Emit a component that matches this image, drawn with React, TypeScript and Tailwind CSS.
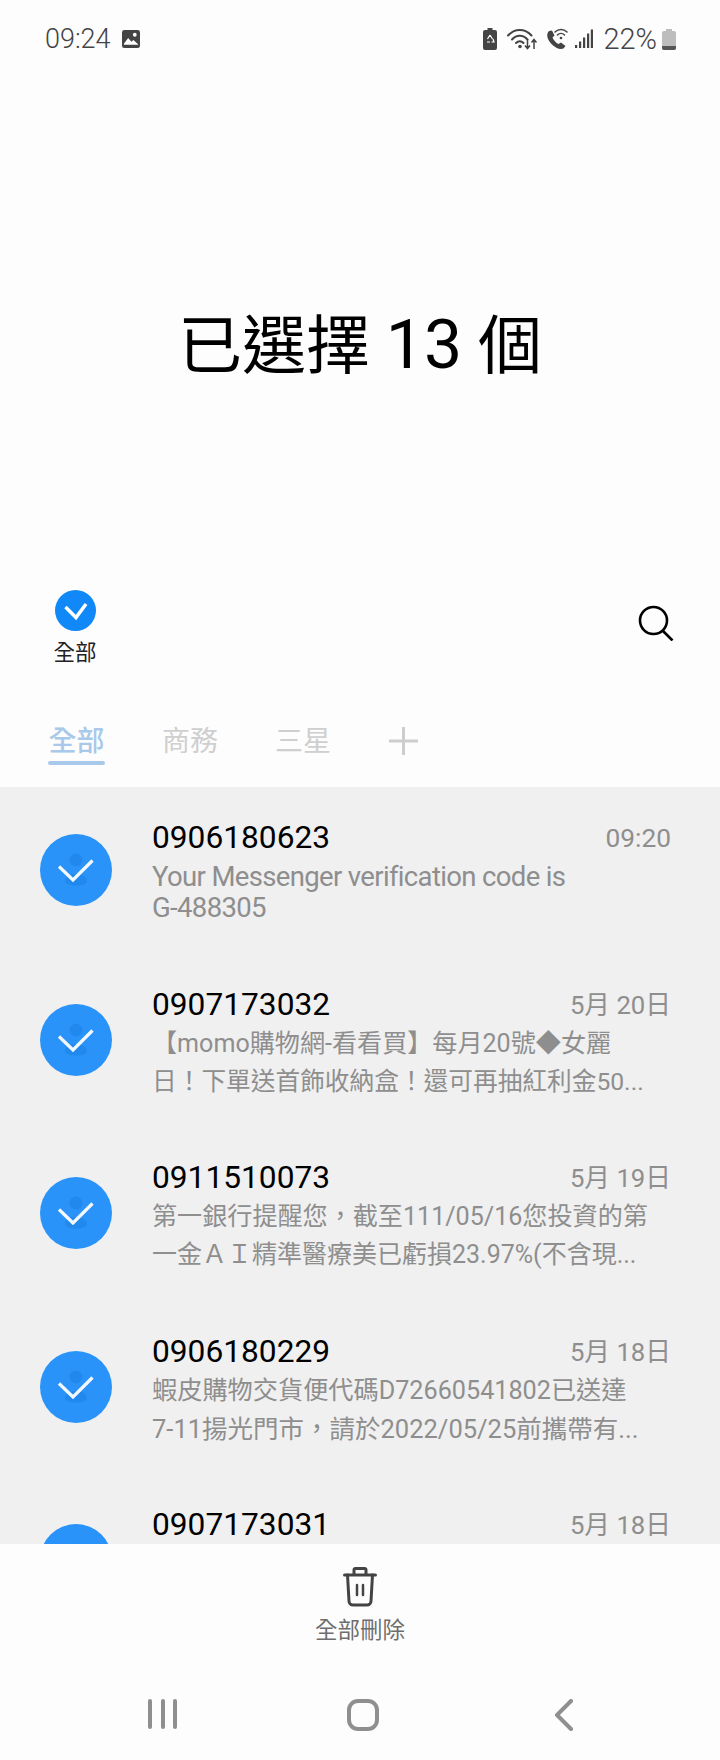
const cjk = { fontFamily: 'Roboto, "Noto Sans CJK TC", sans-serif' };

function RowCheck() {
  return (
    <svg width="72" height="72" viewBox="0 0 72 72" className="shrink-0">
      <circle cx="36" cy="36" r="36" fill="#2a93f9" />
      <circle cx="36" cy="26" r="6.500" fill="#2189ee" />
      <path d="M25 47c0-4 5-7 11-7s11 3 11 7c0 3-5 4.500-11 4.500S25 50 25 47z" fill="#2189ee" />
      <path d="M19 32.500l14 13.500 19.500-19.500" fill="none" stroke="#f4f9ff" strokeWidth="3.200" />
    </svg>
  );
}

const rows = [
  { h: 'h-[170px]', name: '0906180623', time: '09:20', t: 'text-[26.300px]', a: 'Your Messenger verification code is', b: 'G-488305', pt: 'pt-[33px]', text: 'mt-[5px] leading-[31px] tracking-[-0.650px]', la: 'text-[27.500px]', lb: 'text-[27.500px]' },
  { h: 'h-[173px]', name: '0907173032', time: '5月 20日', t: 'text-[25.700px]', a: '【momo購物網-看看買】每月20號◆女麗', b: '日！下單送首飾收納盒！還可再抽紅利金50...', pt: 'pt-[30px]', text: 'mt-[2px] leading-[38px]', la: 'text-[25.100px]', lb: 'text-[24.700px]' },
  { h: 'h-[174px]', name: '0911510073', time: '5月 19日', t: 'text-[25.700px]', a: '第一銀行提醒您，截至111/05/16您投資的第', b: '一金ＡＩ精準醫療美已虧損23.97%(不含現...', pt: 'pt-[30px]', text: 'mt-[2px] leading-[38px]', la: 'text-[25.100px]', lb: 'text-[25px]' },
  { h: 'h-[173px]', name: '0906180229', time: '5月 18日', t: 'text-[25.700px]', a: '蝦皮購物交貨便代碼D72660541802已送達', b: '7-11揚光門市，請於2022/05/25前攜帶有...', pt: 'pt-[30px]', text: 'mt-[2px] leading-[38px]', la: 'text-[25.200px]', lb: 'text-[25.500px]' },
  { h: 'h-[173px]', name: '0907173031', time: '5月 18日', t: 'text-[25.700px]', a: '', b: '', pt: 'pt-[30px]', text: 'mt-[2px] leading-[38px]', la: 'text-[25.100px]', lb: 'text-[25.100px]' },
];

export default function App() {
  return (
    <div className="w-[720px] h-[1760px] flex flex-col overflow-hidden bg-[#fdfdfd]" style={cjk}>
      {/* status bar */}
      <div className="h-[78px] shrink-0 flex items-center justify-between pl-[45px] pr-[44px] text-[#444444]">
        <div className="flex items-center gap-[11px]">
          <span className="text-[27px] font-light leading-none">09:24</span>
          <svg width="18" height="18" viewBox="0 0 19 19">
            <rect width="19" height="19" rx="2.500" fill="#444" />
            <circle cx="13.500" cy="5" r="2" fill="#fff" />
            <path d="M2 14.500l4.500-6 3.500 4 2-2 5 4.500v.5H2z" fill="#fff" />
          </svg>
        </div>
        <div className="flex items-center">
          <svg width="14" height="22" viewBox="0 0 14 22" className="mr-[10px]">
            <path d="M4.500 0h5v2H12a2 2 0 0 1 2 2v16a2 2 0 0 1-2 2H2a2 2 0 0 1-2-2V4a2 2 0 0 1 2-2h2.500z" fill="#444" />
            <path d="M7 7l2.500 4M7 7L4.500 11M4 14h3M10 11l1 3H8.500" fill="none" stroke="#fff" strokeWidth="1.200" />
          </svg>
          <svg width="30" height="22" viewBox="0 0 30 22" className="mr-[9px]">
            <g fill="none" stroke="#444" strokeWidth="2" strokeLinecap="round">
              <path d="M1 7.500C7.500 0 18 0 24.500 7.500" />
              <path d="M5 11.500c4.500-5 11-5 15.500 0" />
              <path d="M9 15c2.500-2.500 5-2.500 7.500 0" />
            </g>
            <circle cx="13" cy="18.500" r="1.800" fill="#444" />
            <path d="M20.500 11v9M18 17.500l2.500 3 2.500-3M27 21v-9M24.500 14.500l2.500-3 2.500 3" fill="none" stroke="#444" strokeWidth="1.500" />
          </svg>
          <svg width="22" height="22" viewBox="0 0 22 22" className="mr-[7px]">
            <path d="M3 3c-3 3-2 8 2 12.500S14 22 17.500 20.500l2-2.500-4.500-3.500-2.500 1.500c-2.500-1-5-4-6-6.500l2-2L6 2.500z" fill="#444" />
            <g fill="none" stroke="#444" strokeWidth="1.500" strokeLinecap="round">
              <path d="M9 4c3.500-3.500 8.500-3.500 12 0" />
              <path d="M11.500 7c2-2 5-2 7 0" />
            </g>
            <circle cx="15" cy="10" r="1.300" fill="#444" />
          </svg>
          <svg width="18" height="20" viewBox="0 0 18 20" className="mr-[10px]">
            <rect x="0" y="16" width="2.200" height="3" fill="#444" />
            <rect x="4" y="12.500" width="2.200" height="6.500" fill="#444" />
            <rect x="8" y="8.500" width="2.200" height="10.500" fill="#444" />
            <rect x="12" y="4.500" width="2.200" height="14.500" fill="#444" />
            <rect x="15.800" y="0.500" width="2.200" height="18.500" fill="#444" />
          </svg>
          <span className="text-[29px] font-light leading-none mr-[5px]">22%</span>
          <svg width="14" height="21" viewBox="0 0 14 21">
            <path d="M4 0h6v2h2a2 2 0 0 1 2 2v15a2 2 0 0 1-2 2H2a2 2 0 0 1-2-2V4a2 2 0 0 1 2-2h2z" fill="#bdbdbd" />
            <path d="M0 17h14v2a2 2 0 0 1-2 2H2a2 2 0 0 1-2-2z" fill="#555" />
          </svg>
        </div>
      </div>

      {/* title */}
      <div className="h-[502px] shrink-0 flex justify-center pt-[225px]">
        <h1 className="text-[64px] leading-[84px] font-normal text-black whitespace-pre">
          已選擇 <span className="text-[68px] leading-[84px]">13</span> 個
        </h1>
      </div>

      {/* select all + search */}
      <div className="h-[120px] shrink-0 flex justify-between pl-[53px] pr-[46px] pt-[10px]">
        <div className="flex flex-col items-center w-[44px]">
          <svg width="41" height="41" viewBox="0 0 41 41">
            <circle cx="20.500" cy="20.500" r="20.500" fill="#1088f7" />
            <path d="M10.500 17l10.500 10.500 10-13.500" fill="none" stroke="#fff" strokeWidth="3.500" />
          </svg>
          <span className="text-[21.500px] leading-[30px] mt-[7px] text-[#222222] whitespace-nowrap">全部</span>
        </div>
        <svg width="36" height="36" viewBox="0 0 36 36" className="mt-[15px]">
          <circle cx="15.500" cy="15.500" r="13.500" fill="none" stroke="#000" strokeWidth="2.600" />
          <path d="M24.500 25.500l10 10" stroke="#000" strokeWidth="2.600" />
        </svg>
      </div>

      {/* tabs */}
      <div className="h-[87px] shrink-0 flex pl-[48px]">
        <div className="w-[57px] flex flex-col items-center">
          <span className="text-[28px] leading-[39px] mt-[22px] font-medium text-[#a8c9ea] whitespace-nowrap">全部</span>
          <div className="w-[57px] h-[4px] rounded-full bg-[#a8c9ea]" />
        </div>
        <span className="text-[28px] leading-[40px] mt-[22px] ml-[57px] text-[#cfcfcf] whitespace-nowrap">商務</span>
        <span className="text-[28px] leading-[40px] mt-[22px] ml-[57px] text-[#cfcfcf] whitespace-nowrap">三星</span>
        <svg width="29" height="28" viewBox="0 0 29 28" className="ml-[58px] mt-[27px]">
          <path d="M14.500 0v28M1 14h27" stroke="#cdcdcd" strokeWidth="3" strokeLinecap="round" />
        </svg>
      </div>

      {/* list */}
      <div className="flex-1 min-h-0 overflow-hidden bg-[#f0f0f0]">
        {rows.map((r) => (
          <div key={r.name} className={`${r.h} flex pl-[40px] pr-[49px]`}>
            <div className="pt-[47px] shrink-0">
              <RowCheck />
            </div>
            <div className={`${r.pt} ml-[40px] flex-1 min-w-0`}>
              <div className="flex justify-between items-center">
                <span className="text-[31.700px] leading-[36px] text-black">{r.name}</span>
                <span className={`${r.t} leading-[36px] text-[#8e8e8e]`}>{r.time}</span>
              </div>
              <div className={`${r.text} text-[#8e8e8e] whitespace-nowrap`}>
                <div className={r.la}>{r.a}</div>
                <div className={r.lb}>{r.b}</div>
              </div>
            </div>
          </div>
        ))}
      </div>

      {/* bottom */}
      <div className="h-[216px] shrink-0 flex flex-col items-center bg-[#fdfdfd]">
        <svg width="34" height="40" viewBox="0 0 34 40" className="mt-[23px]">
          <g fill="none" stroke="#444" strokeWidth="3" strokeLinecap="round" strokeLinejoin="round">
            <path d="M1.500 8h31" />
            <path d="M11 7V3a1.500 1.500 0 0 1 1.500-1.500h9A1.500 1.500 0 0 1 23 3v4" />
            <path d="M4.500 8l1.500 26a4 4 0 0 0 4 4h14a4 4 0 0 0 4-4l1.500-26" />
            <path d="M14 18v10M20 18v10" strokeWidth="2.500" />
          </g>
        </svg>
        <span className="text-[22.500px] leading-[30px] mt-[8px] text-[#6d6d6d] whitespace-nowrap">全部刪除</span>
        <div className="w-full flex mt-[54px] h-[32px]">
          <div className="ml-[148px] w-[29px] flex justify-between">
            <div className="w-[4px] h-[30px] rounded-full bg-[#8f8f8f]" />
            <div className="w-[4px] h-[30px] rounded-full bg-[#8f8f8f]" />
            <div className="w-[4px] h-[30px] rounded-full bg-[#8f8f8f]" />
          </div>
          <div className="ml-[170px] w-[32px] h-[32px] rounded-[11px] border-[4px] border-[#8f8f8f]" />
          <svg width="20" height="32" viewBox="0 0 20 32" className="ml-[175px]">
            <path d="M17 2L3 16l14 14" fill="none" stroke="#8f8f8f" strokeWidth="4" strokeLinecap="round" strokeLinejoin="round" />
          </svg>
        </div>
      </div>
    </div>
  );
}
